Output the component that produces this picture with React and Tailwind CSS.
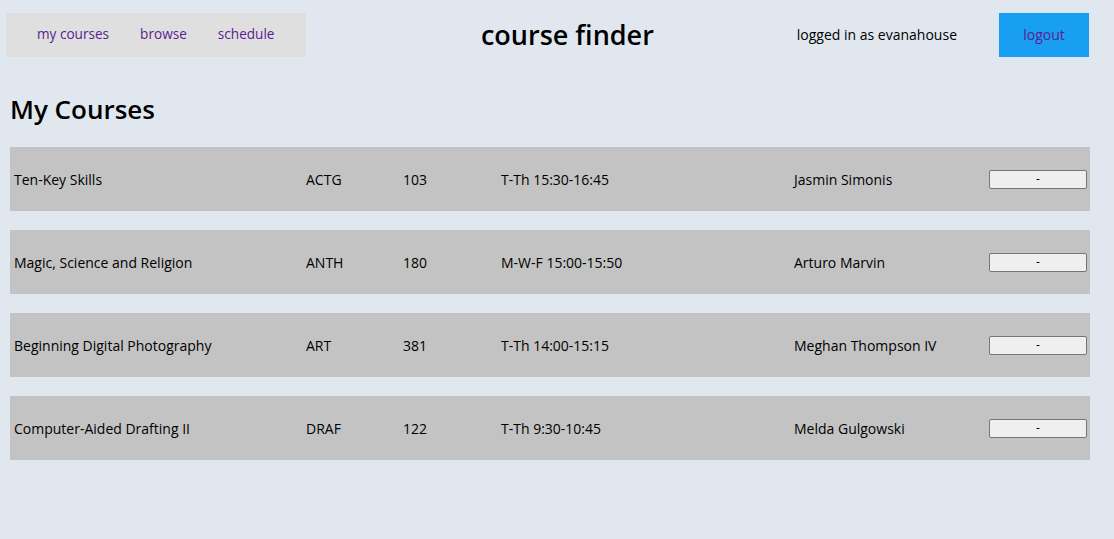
const courses = [
  { name: "Ten-Key Skills", dept: "ACTG", num: "103", time: "T-Th 15:30-16:45", inst: "Jasmin Simonis" },
  { name: "Magic, Science and Religion", dept: "ANTH", num: "180", time: "M-W-F 15:00-15:50", inst: "Arturo Marvin" },
  { name: "Beginning Digital Photography", dept: "ART", num: "381", time: "T-Th 14:00-15:15", inst: "Meghan Thompson IV" },
  { name: "Computer-Aided Drafting II", dept: "DRAF", num: "122", time: "T-Th 9:30-10:45", inst: "Melda Gulgowski" },
];

export default function App() {
  return (
    <div className="min-h-[539px] bg-[#e1e7ef] text-black" style={{ fontFamily: '"Open Sans", "Noto Sans", sans-serif' }}>
      <header className="flex items-center pt-[13px] pl-[6px] pr-[25px]">
        <nav className="flex h-[44px] w-[300px] items-center gap-[31px] bg-[#dfdfdf] pb-[1px] pl-[31px] text-[13.6px] text-[#5a1d91]">
          <span>my courses</span>
          <span>browse</span>
          <span>schedule</span>
        </nav>
        <div className="flex-1 pb-[2px] pl-[32px] text-center text-[27px] font-semibold leading-none">course finder</div>
        <div className="mr-[42px] pb-[2px] text-[14px]">logged in as evanahouse</div>
        <button className="h-[44px] w-[90px] bg-[#199ff1] pb-[2px] text-[14px] text-[#5a1d91]">logout</button>
      </header>
      <h1 className="mt-[39px] pl-[10px] text-[26px] font-semibold leading-none">My Courses</h1>
      <div className="mt-[25px] flex flex-col gap-[19px] px-[10px]">
        {courses.map((c) => (
          <div key={c.name} className="grid h-[64px] w-[1080px] grid-cols-[292px_97px_98px_293px_195px_98px] items-center bg-[#c3c3c3] pl-[4px] text-[14px]">
            <span>{c.name}</span>
            <span>{c.dept}</span>
            <span>{c.num}</span>
            <span>{c.time}</span>
            <span>{c.inst}</span>
            <button className="h-[19px] w-[98px] rounded-[2px] border border-[#767676] bg-[#efefef] text-[12px] leading-none">-</button>
          </div>
        ))}
      </div>
    </div>
  );
}
